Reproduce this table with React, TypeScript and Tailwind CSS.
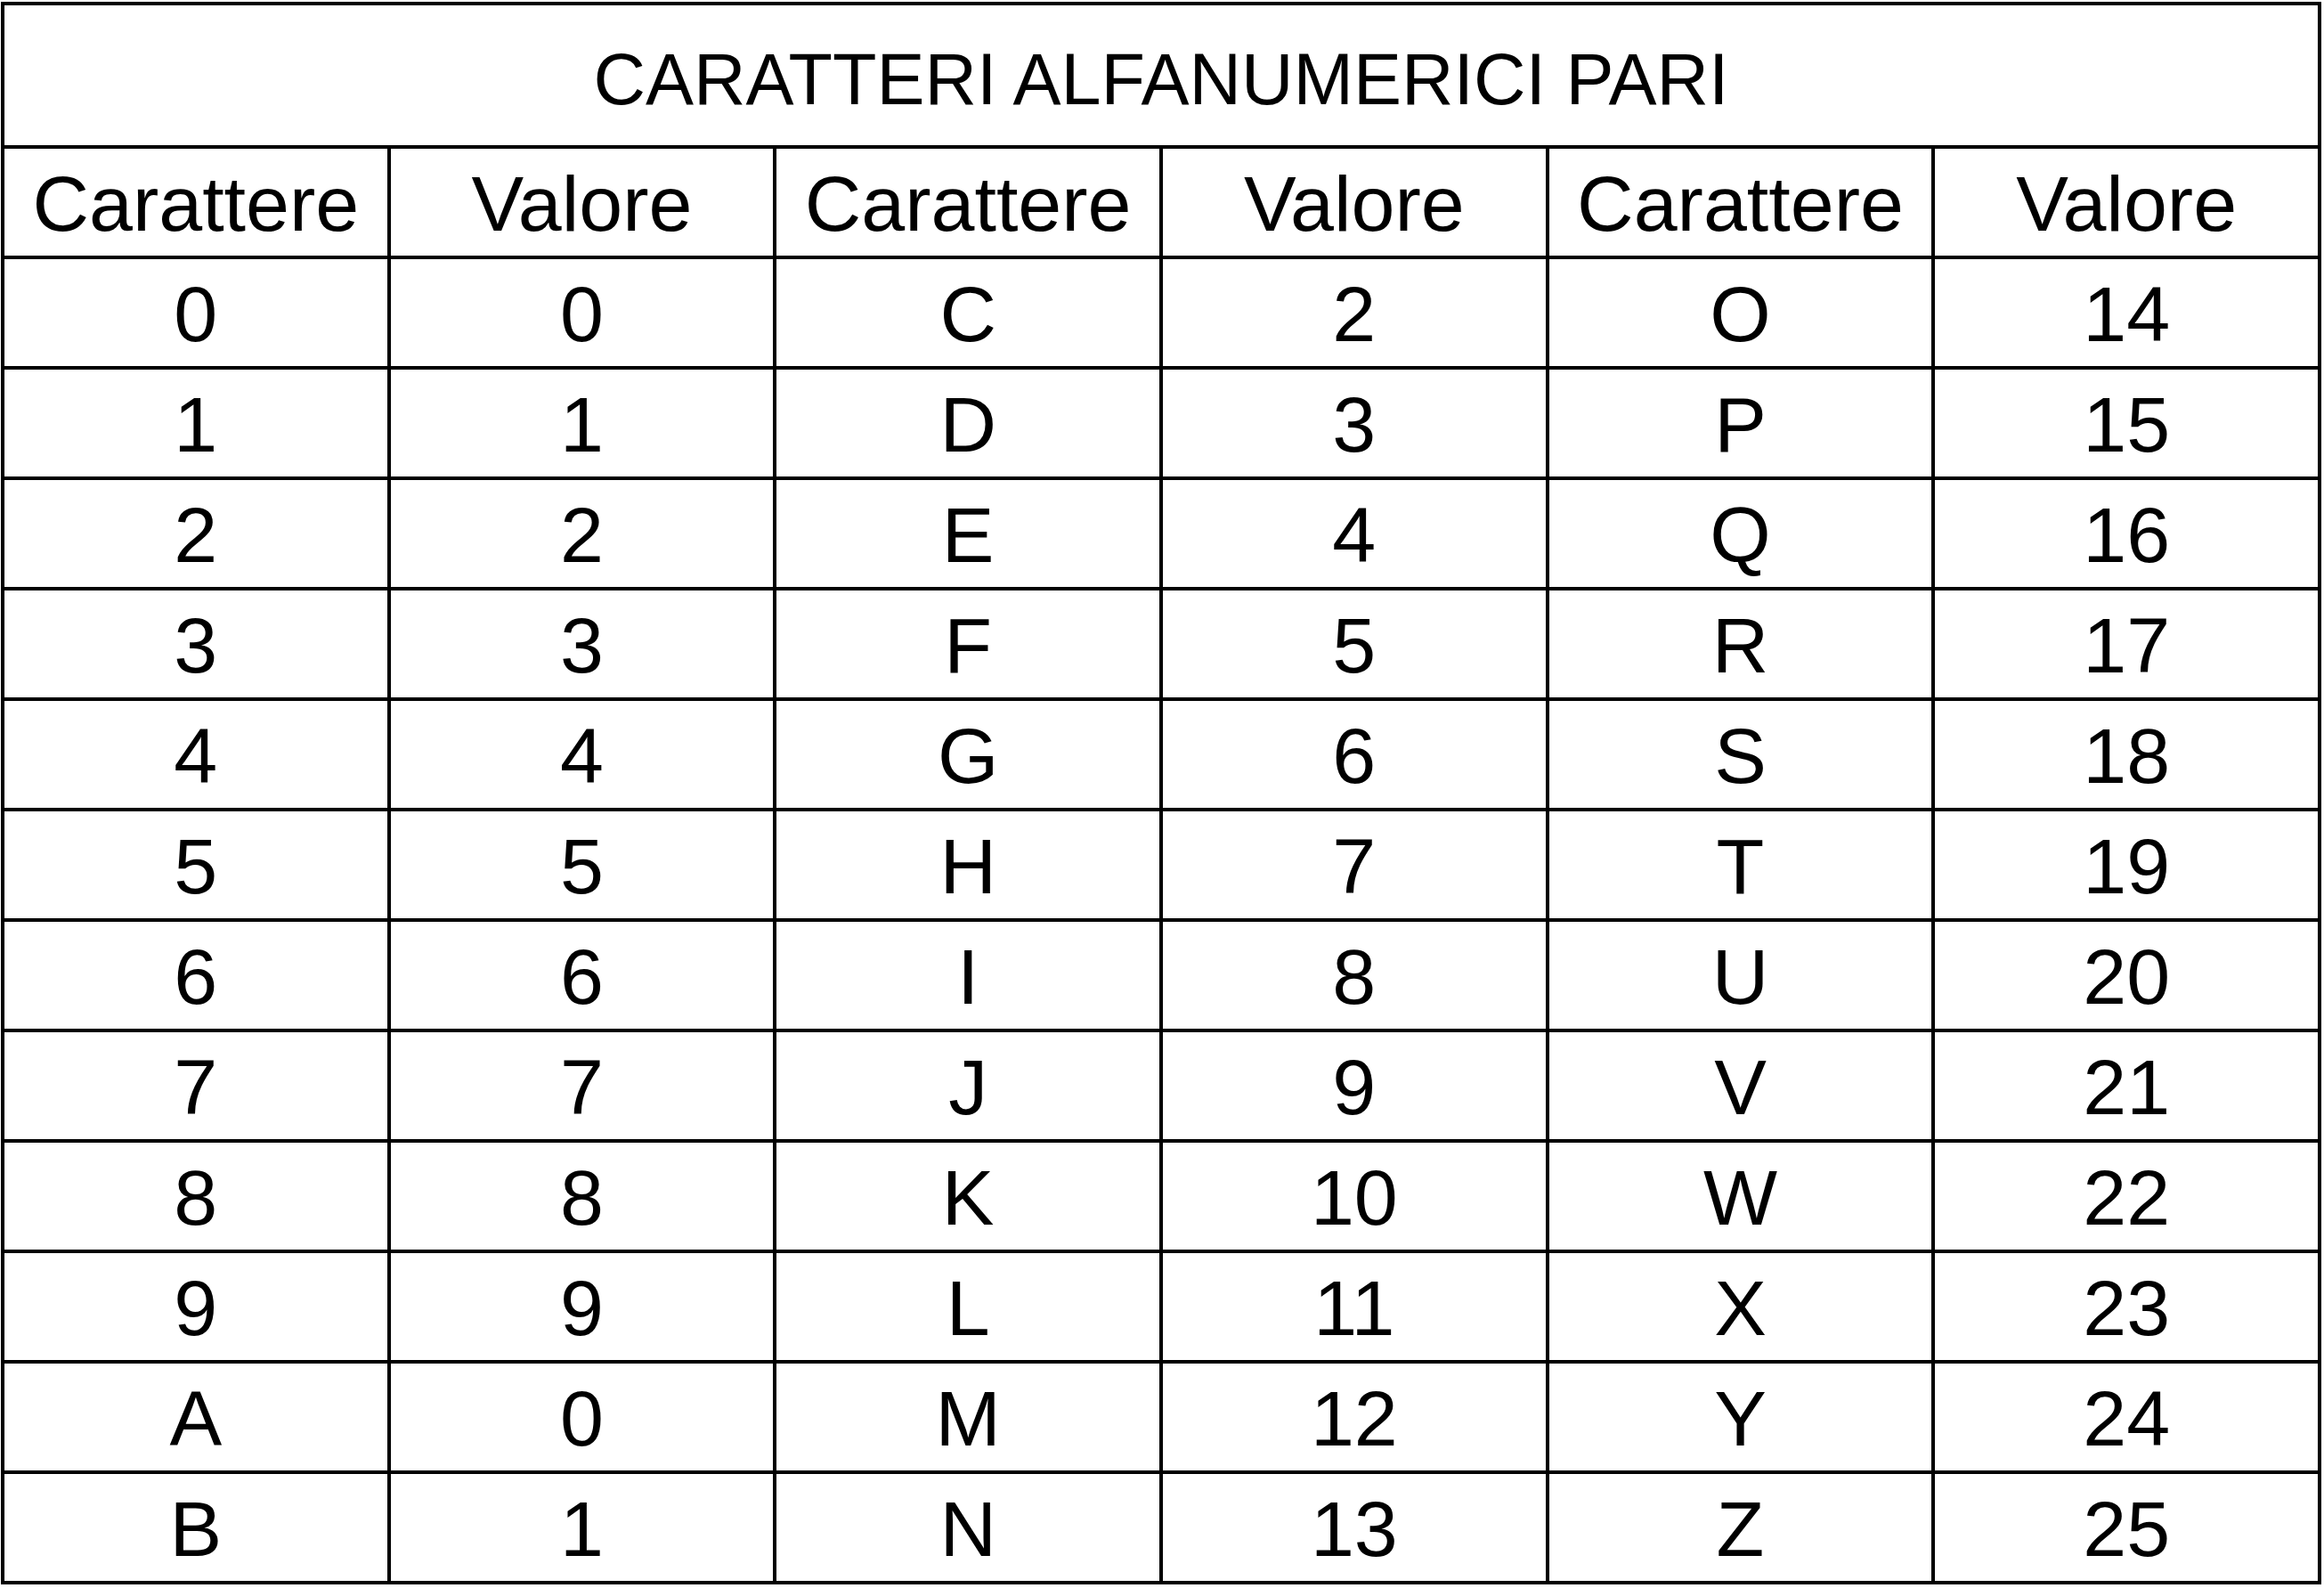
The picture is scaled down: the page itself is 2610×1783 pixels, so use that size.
const rows: [string, string, string, string, string, string][] = [
  ['0', '0', 'C', '2', 'O', '14'],
  ['1', '1', 'D', '3', 'P', '15'],
  ['2', '2', 'E', '4', 'Q', '16'],
  ['3', '3', 'F', '5', 'R', '17'],
  ['4', '4', 'G', '6', 'S', '18'],
  ['5', '5', 'H', '7', 'T', '19'],
  ['6', '6', 'I', '8', 'U', '20'],
  ['7', '7', 'J', '9', 'V', '21'],
  ['8', '8', 'K', '10', 'W', '22'],
  ['9', '9', 'L', '11', 'X', '23'],
  ['A', '0', 'M', '12', 'Y', '24'],
  ['B', '1', 'N', '13', 'Z', '25'],
]

const headers = ['Carattere', 'Valore', 'Carattere', 'Valore', 'Carattere', 'Valore']

function Cell({ children }: { children: string }) {
  return (
    <div className="bg-white h-[120px] flex items-center justify-center pt-[4px] text-[88px] leading-none text-black">
      {children}
    </div>
  )
}

export default function App() {
  return (
    <div className="w-[2610px] h-[1783px] bg-white pt-[2px] pl-[1px] font-['Liberation_Sans',Arial,sans-serif]">
      <div className="w-[2606px] grid grid-cols-6 gap-[4px] bg-black p-[4px]">
        <div className="col-span-6 bg-white h-[157px] flex items-center justify-center pt-[10px] text-[81px] leading-none text-black">
          CARATTERI ALFANUMERICI PARI
        </div>
        {headers.map((h, i) => (
          <Cell key={'h' + i}>{h}</Cell>
        ))}
        {rows.map((r, i) =>
          r.map((v, j) => <Cell key={i + '-' + j}>{v}</Cell>)
        )}
      </div>
    </div>
  )
}
